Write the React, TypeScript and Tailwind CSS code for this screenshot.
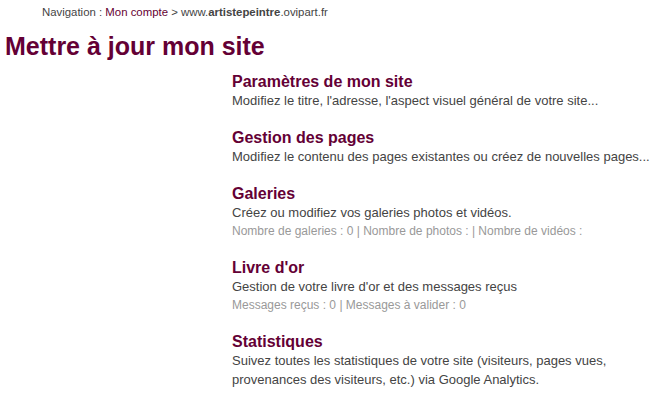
const sections = [
  {
    title: 'Paramètres de mon site',
    desc: "Modifiez le titre, l'adresse, l'aspect visuel général de votre site...",
  },
  {
    title: 'Gestion des pages',
    desc: 'Modifiez le contenu des pages existantes ou créez de nouvelles pages...',
  },
  {
    title: 'Galeries',
    desc: 'Créez ou modifiez vos galeries photos et vidéos.',
    meta: 'Nombre de galeries : 0 | Nombre de photos : | Nombre de vidéos :',
  },
  {
    title: "Livre d'or",
    desc: "Gestion de votre livre d'or et des messages reçus",
    meta: 'Messages reçus : 0 | Messages à valider : 0',
  },
  {
    title: 'Statistiques',
    desc: 'Suivez toutes les statistiques de votre site (visiteurs, pages vues, provenances des visiteurs, etc.) via Google Analytics.',
  },
];

export default function App() {
  return (
    <div className="w-[657px] h-[394px] bg-white font-['Liberation_Sans',Arial,sans-serif] overflow-hidden">
      <div className="pl-[42px] pt-[4px] text-[11.4px] leading-[16px] text-[#444]">
        Navigation : <span className="text-[#660033]">Mon compte</span> &gt; www.
        <span className="font-bold">artistepeintre</span>.ovipart.fr
      </div>
      <h1 className="pl-[5px] mt-[12px] text-[25px] leading-[28px] font-bold text-[#640035]">
        Mettre à jour mon site
      </h1>
      <div className="pl-[232px] mt-[12px] flex flex-col gap-[18px]">
        {sections.map((s) => (
          <div key={s.title} className="w-[420px]">
            <h2 className="text-[16px] leading-[19px] font-bold text-[#640035]">{s.title}</h2>
            <p className="text-[13px] leading-[19px] text-[#444]">{s.desc}</p>
            {s.meta && <p className="text-[12px] leading-[18px] text-[#999]">{s.meta}</p>}
          </div>
        ))}
      </div>
    </div>
  );
}
